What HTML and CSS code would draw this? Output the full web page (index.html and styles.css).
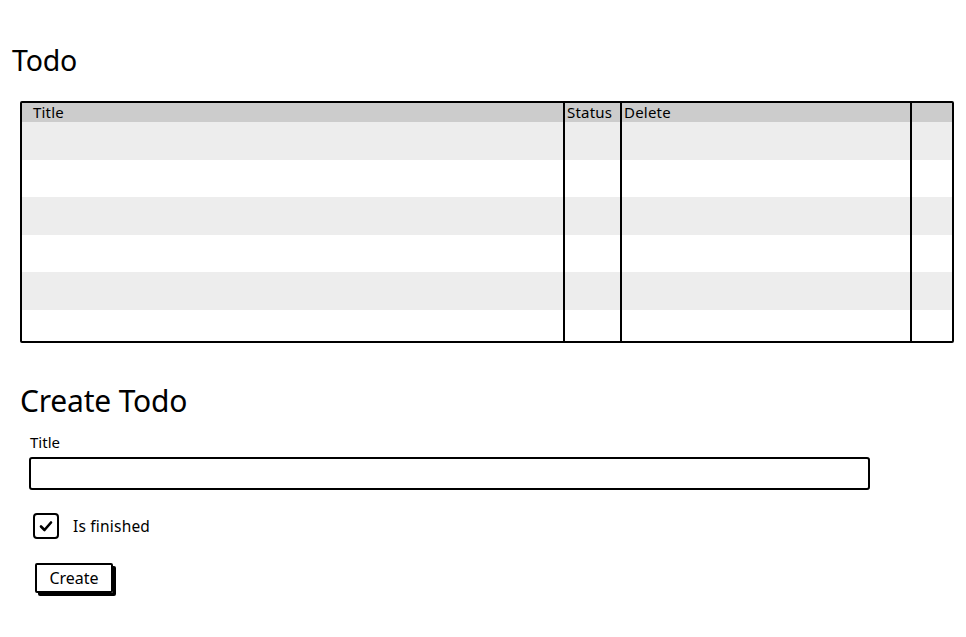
FILE: index.html
```html
<!DOCTYPE html>
<html>
<head>
<meta charset="utf-8">
<link rel="stylesheet" href="styles.css">
</head>
<body>
<div class="page">
  <h1 class="h-todo">Todo</h1>
  <div class="table">
    <div class="col col-title">
      <div class="th">Title</div>
      <div class="td odd"></div><div class="td"></div><div class="td odd"></div><div class="td"></div><div class="td odd"></div><div class="td last"></div>
    </div>
    <div class="col col-status">
      <div class="th">Status</div>
      <div class="td odd"></div><div class="td"></div><div class="td odd"></div><div class="td"></div><div class="td odd"></div><div class="td last"></div>
    </div>
    <div class="col col-delete">
      <div class="th">Delete</div>
      <div class="td odd"></div><div class="td"></div><div class="td odd"></div><div class="td"></div><div class="td odd"></div><div class="td last"></div>
    </div>
    <div class="col col-extra">
      <div class="th"></div>
      <div class="td odd"></div><div class="td"></div><div class="td odd"></div><div class="td"></div><div class="td odd"></div><div class="td last"></div>
    </div>
  </div>

  <h2 class="h-create">Create Todo</h2>
  <div class="form">
    <label class="label">Title</label>
    <div class="input"></div>
    <div class="check-row">
      <span class="checkbox">
        <svg width="16" height="14" viewBox="0 0 16 14"><path d="M3 7.5 L6.5 11 L13 3.5" fill="none" stroke="#000" stroke-width="2.6" stroke-linecap="round" stroke-linejoin="round"/></svg>
      </span>
      <span class="check-label">Is finished</span>
    </div>
    <div class="btn">Create</div>
  </div>
</div>
</body>
</html>
```

FILE: styles.css
```css
* { box-sizing: border-box; }
html, body { margin: 0; padding: 0; background: #fff; }
body {
  font-family: "Noto Sans", "Open Sans", sans-serif;
  color: #000;
  width: 966px;
  height: 637px;
  overflow: hidden;
}
.page {
  padding-top: 40px;
}
.h-todo {
  margin: 0 0 0 12px;
  font-size: 28.5px;
  font-weight: 400;
  line-height: 40px;
  height: 40px;
  letter-spacing: -0.2px;
}
.table {
  margin: 21px 0 0 20px;
  width: 934px;
  height: 242px;
  border: 2.5px solid #000;
  border-radius: 2px;
  display: flex;
  background: #fff;
}
.col { display: flex; flex-direction: column; }
.col-title { width: 543px; border-right: 2.5px solid #000; }
.col-status { width: 57px; border-right: 2.5px solid #000; }
.col-delete { width: 290px; border-right: 2.5px solid #000; }
.col-extra { flex: 1; }
.th {
  height: 19px;
  background: #cccccc;
  font-size: 15px;
  line-height: 18px;
  padding-left: 2px;
  white-space: nowrap;
  letter-spacing: 0.2px;
}
.col-title .th { padding-left: 11px; }
.td { height: 37.6px; }
.td.odd { background: #ededed; }
.td.last { flex: 1; }

.h-create {
  margin: 40px 0 0 20px;
  font-size: 30px;
  font-weight: 400;
  line-height: 36px;
  height: 36px;
  letter-spacing: -0.2px;
}
.form {
  padding-left: 29px;
}
.label {
  display: block;
  margin: 13px 0 0 1px;
  font-size: 15px;
  line-height: 20px;
}
.input {
  margin-top: 5px;
  width: 841px;
  height: 33px;
  border: 2.5px solid #000;
  border-radius: 3px;
}
.check-row {
  margin-top: 22px;
  display: flex;
  align-items: center;
  padding-left: 4px;
  height: 28px;
}
.checkbox {
  width: 26px;
  height: 26px;
  border: 2.5px solid #000;
  border-radius: 4px;
  display: flex;
  align-items: center;
  justify-content: center;
}
.check-label {
  margin-left: 14px;
  font-size: 15.5px;
  letter-spacing: 0.2px;
}
.btn {
  margin: 23px 0 0 6px;
  width: 78px;
  height: 30px;
  border: 2px solid #000;
  border-radius: 2px;
  box-shadow: 3px 3px 0 #000;
  font-size: 16px;
  line-height: 26px;
  text-align: center;
}
```
